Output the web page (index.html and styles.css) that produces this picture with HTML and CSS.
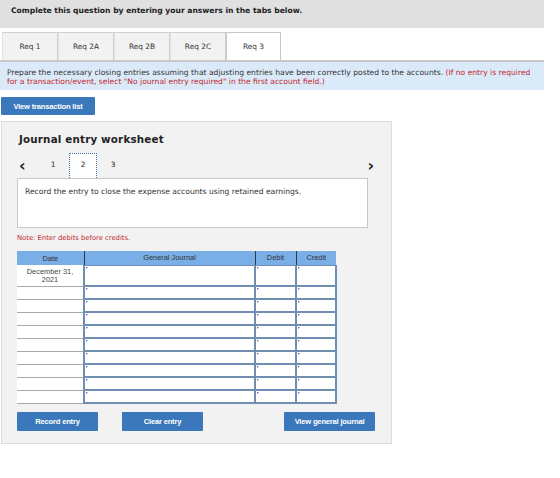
FILE: index.html
```html
<!DOCTYPE html>
<html lang="en">
<head>
    <meta charset="UTF-8">
    <title>Journal entry worksheet</title>
    <link rel="stylesheet" href="styles.css">
</head>
<body>
    <div class="header">Complete this question by entering your answers in the tabs below.</div>

    <div class="tabs">
        <div class="tab">Req 1</div>
        <div class="tab">Req 2A</div>
        <div class="tab">Req 2B</div>
        <div class="tab">Req 2C</div>
        <div class="tab active">Req 3</div>
    </div>

    <div class="info">
        Prepare the necessary closing entries assuming that adjusting entries have been correctly posted to the accounts.
        <span class="red">(If no entry is required for a transaction/event, select "No journal entry required" in the first account field.)</span>
    </div>

    <button class="btn btn-list">View transaction list</button>

    <div class="panel">
        <h2>Journal entry worksheet</h2>

        <div class="pager">
            <span class="arrow">&lsaquo;</span>
            <span class="page">1</span>
            <span class="page current">2</span>
            <span class="page last">3</span>
            <span class="arrow next">&rsaquo;</span>
        </div>

        <div class="instruction">Record the entry to close the expense accounts using retained earnings.</div>

        <div class="note">Note: Enter debits before credits.</div>

        <table class="journal">
            <thead>
                <tr>
                    <th class="c-date">Date</th>
                    <th class="c-gj">General Journal</th>
                    <th class="c-debit">Debit</th>
                    <th class="c-credit">Credit</th>
                </tr>
            </thead>
            <tbody>
                <tr class="first">
                    <td class="date">December 31,<br>2021</td>
                    <td class="in"></td><td class="in"></td><td class="in"></td>
                </tr>
                <tr><td class="date"></td><td class="in"></td><td class="in"></td><td class="in"></td></tr>
                <tr><td class="date"></td><td class="in"></td><td class="in"></td><td class="in"></td></tr>
                <tr><td class="date"></td><td class="in"></td><td class="in"></td><td class="in"></td></tr>
                <tr><td class="date"></td><td class="in"></td><td class="in"></td><td class="in"></td></tr>
                <tr><td class="date"></td><td class="in"></td><td class="in"></td><td class="in"></td></tr>
                <tr><td class="date"></td><td class="in"></td><td class="in"></td><td class="in"></td></tr>
                <tr><td class="date"></td><td class="in"></td><td class="in"></td><td class="in"></td></tr>
                <tr><td class="date"></td><td class="in"></td><td class="in"></td><td class="in"></td></tr>
                <tr><td class="date"></td><td class="in"></td><td class="in"></td><td class="in"></td></tr>
            </tbody>
        </table>

        <div class="actions">
            <button class="btn">Record entry</button>
            <button class="btn btn-clear">Clear entry</button>
            <button class="btn btn-view">View general journal</button>
        </div>
    </div>
</body>
</html>
```

FILE: styles.css
```css
* {
    margin: 0;
    padding: 0;
    box-sizing: border-box;
}

body {
    font-family: 'DejaVu Sans', Verdana, sans-serif;
    font-size: 7.6px;
    color: #333;
    background: #fff;
    width: 560px;
}

.header {
    width: 544px;
    height: 28px;
    background: #e0e0e0;
    padding: 6px 11px 0;
    font-weight: bold;
    font-size: 7.6px;
    color: #222;
}

.tabs {
    display: flex;
    margin-top: 4px;
    padding-left: 2px;
}

.tab {
    width: 56px;
    height: 28px;
    background: #f2f2f2;
    border: 1px solid #cfcfcf;
    border-bottom: none;
    border-left-color: #e2e2e2;
    text-align: center;
    line-height: 27px;
    font-size: 7.4px;
    color: #333;
}

.tab.active {
    width: 55px;
    background: #fff;
    border-color: #c8c8c8;
}

.info {
    width: 544px;
    height: 30px;
    background: #dbeaf8;
    border-top: 2px solid #c8c8c8;
    padding: 6px 7px 0;
    font-size: 7.6px;
    line-height: 9px;
    color: #333;
}

.red {
    color: #c4262e;
}

.btn {
    background: #3a77bb;
    color: #fff;
    border: none;
    border-radius: 1px;
    font-family: 'Liberation Sans', Arial, sans-serif;
    font-weight: bold;
    font-size: 7.6px;
    letter-spacing: -0.2px;
    height: 19px;
    width: 81px;
    cursor: pointer;
}

.btn-list {
    display: block;
    margin: 7px 0 0 1px;
    width: 94px;
    height: 18px;
}

.panel {
    margin: 6px 0 0 1px;
    width: 391px;
    height: 323px;
    background: #f2f2f2;
    border: 1px solid #dcdcdc;
    padding: 0 0 0 15px;
}

.panel h2 {
    margin: 11px 0 0 2px;
    font-size: 10.3px;
    font-weight: bold;
    color: #222;
    letter-spacing: 0.2px;
}

.pager {
    display: flex;
    align-items: flex-end;
    height: 25px;
    margin-top: 8px;
}

.arrow {
    font-size: 16px;
    font-weight: bold;
    color: #222;
    width: 21px;
    padding-left: 2px;
    line-height: 14px;
    align-self: center;
}

.arrow.next {
    margin-left: auto;
    margin-right: 17px;
    width: auto;
}

.page {
    width: 30px;
    height: 24px;
    line-height: 22px;
    text-align: center;
    font-size: 7.4px;
    color: #222;
}

.page.current {
    width: 28px;
    height: 25px;
    margin-left: 1px;
    background: #fff;
    border: 1px dotted #3a6fb0;
    border-bottom: none;
}

.page.last {
    width: 32px;
}

.instruction {
    width: 351px;
    height: 50px;
    background: #fff;
    border: 1px solid #c8c8c8;
    padding: 8px 7px;
    font-size: 7.6px;
    color: #333;
}

.note {
    margin-top: 6px;
    color: #c4262e;
    font-size: 6.8px;
}

.journal {
    margin-top: 9px;
    border-collapse: collapse;
    font-family: 'Liberation Sans', Arial, sans-serif;
    font-size: 7.4px;
}

.journal th {
    background: #7aaee6;
    color: #333;
    font-weight: normal;
    height: 14px;
    border-left: 1px solid #2e3a46;
    padding: 0;
}

.journal th:first-child {
    border-left: none;
}

.c-date { width: 67px; }
.c-gj { width: 171px; }
.c-debit { width: 41px; }
.c-credit { width: 40px; }

.journal td {
    height: 13px;
    padding: 0;
}

.journal tr.first td {
    height: 21px;
}

.journal td.date {
    background: #fff;
    border-bottom: 1px solid #a9a9a9;
    text-align: center;
    vertical-align: top;
    line-height: 8px;
    padding-top: 3px;
    color: #444;
}

.journal td.in {
    background: #fff;
    border: 2px solid #6f8eb2;
    border-top-width: 1px;
    position: relative;
}

.journal td.in::before {
    content: "";
    position: absolute;
    left: 1px;
    top: 1px;
    border-left: 2px solid #3a7fd0;
    border-bottom: 2px solid transparent;
}

.actions {
    display: flex;
    margin-top: 8px;
    width: 358px;
}

.btn-clear {
    margin-left: 24px;
}

.btn-view {
    margin-left: auto;
    width: 91px;
}
```
